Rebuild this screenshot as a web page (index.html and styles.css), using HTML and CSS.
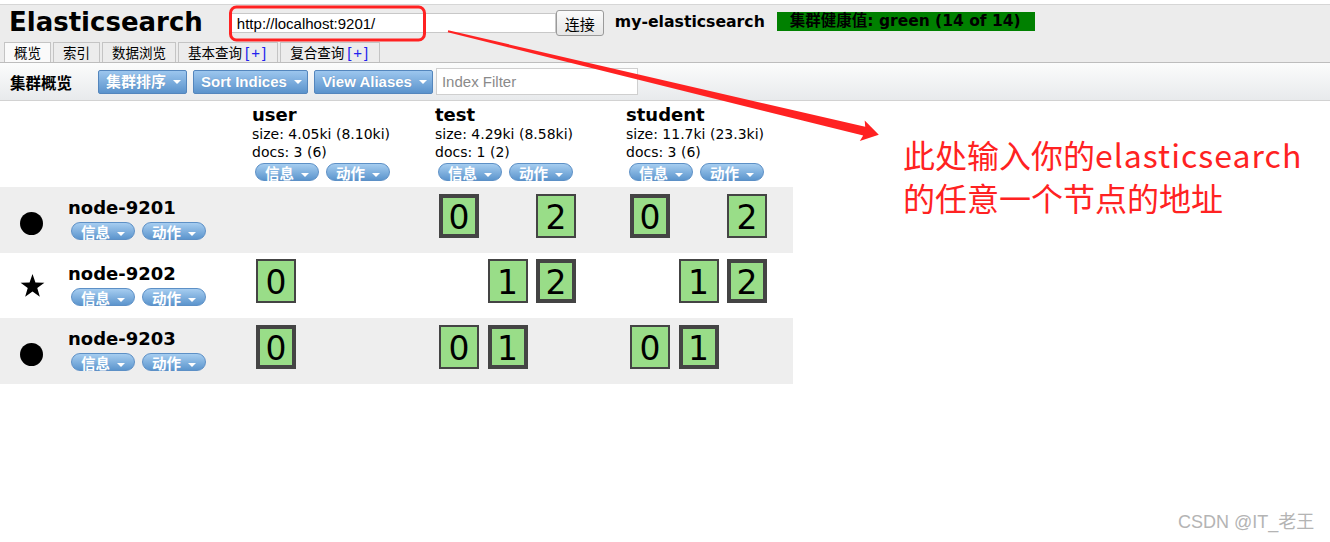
FILE: index.html
```html
<!DOCTYPE html>
<html lang="zh">
<head>
<meta charset="utf-8">
<title>Elasticsearch</title>
<link rel="stylesheet" href="styles.css">
</head>
<body>
<div class="page">
  <header class="header">
    <div class="top">
      <h1 class="title">Elasticsearch</h1>
      <input class="url" type="text" value="http://localhost:9201/">
      <button class="connect">连接</button>
      <span class="cluster">my-elasticsearch</span>
      <span class="health">集群健康值: green (14 of 14)</span>
    </div>
    <nav class="tabs">
      <span class="tab active">概览</span>
      <span class="tab">索引</span>
      <span class="tab">数据浏览</span>
      <span class="tab">基本查询 <b class="plus">[+]</b></span>
      <span class="tab">复合查询 <b class="plus">[+]</b></span>
    </nav>
  </header>

  <div class="toolbar">
    <span class="tb-title">集群概览</span>
    <span class="tbtn first">集群排序<i class="caret"></i></span>
    <span class="tbtn">Sort Indices<i class="caret"></i></span>
    <span class="tbtn">View Aliases<i class="caret"></i></span>
    <input class="filter" type="text" placeholder="Index Filter">
  </div>

  <div class="ov">
    <div class="row hdr">
      <div class="cell"></div>
      <div class="cell ih">
        <div class="iname">user</div>
        <div class="meta">size: 4.05ki (8.10ki)</div>
        <div class="meta">docs: 3 (6)</div>
        <div class="pills"><span class="pill">信息<i class="pcaret"></i></span><span class="pill">动作<i class="pcaret"></i></span></div>
      </div>
      <div class="cell ih">
        <div class="iname">test</div>
        <div class="meta">size: 4.29ki (8.58ki)</div>
        <div class="meta">docs: 1 (2)</div>
        <div class="pills"><span class="pill">信息<i class="pcaret"></i></span><span class="pill">动作<i class="pcaret"></i></span></div>
      </div>
      <div class="cell ih">
        <div class="iname">student</div>
        <div class="meta">size: 11.7ki (23.3ki)</div>
        <div class="meta">docs: 3 (6)</div>
        <div class="pills"><span class="pill">信息<i class="pcaret"></i></span><span class="pill">动作<i class="pcaret"></i></span></div>
      </div>
    </div>

    <div class="row node alt">
      <div class="cell nc">
        <span class="icon"><span class="dot"></span></span>
        <div class="ninfo">
          <div class="nname">node-9201</div>
          <div class="pills"><span class="pill">信息<i class="pcaret"></i></span><span class="pill">动作<i class="pcaret"></i></span></div>
        </div>
      </div>
      <div class="cell sc"><span class="slot"></span><span class="slot"></span><span class="slot"></span></div>
      <div class="cell sc"><span class="shard primary">0</span><span class="slot"></span><span class="shard">2</span></div>
      <div class="cell sc"><span class="shard primary">0</span><span class="slot"></span><span class="shard">2</span></div>
    </div>

    <div class="row node mid">
      <div class="cell nc">
        <span class="icon star-icon"><svg class="star" viewBox="0 0 24 22" width="25" height="23"><polygon points="12,0 14.82,8.12 23.41,8.29 16.57,13.48 19.05,21.71 12,16.8 4.95,21.71 7.43,13.48 0.59,8.29 9.18,8.12" fill="#000"/></svg></span>
        <div class="ninfo">
          <div class="nname">node-9202</div>
          <div class="pills"><span class="pill">信息<i class="pcaret"></i></span><span class="pill">动作<i class="pcaret"></i></span></div>
        </div>
      </div>
      <div class="cell sc"><span class="shard">0</span><span class="slot"></span><span class="slot"></span></div>
      <div class="cell sc"><span class="slot"></span><span class="shard">1</span><span class="shard primary">2</span></div>
      <div class="cell sc"><span class="slot"></span><span class="shard">1</span><span class="shard primary">2</span></div>
    </div>

    <div class="row node alt">
      <div class="cell nc">
        <span class="icon"><span class="dot"></span></span>
        <div class="ninfo">
          <div class="nname">node-9203</div>
          <div class="pills"><span class="pill">信息<i class="pcaret"></i></span><span class="pill">动作<i class="pcaret"></i></span></div>
        </div>
      </div>
      <div class="cell sc"><span class="shard primary">0</span><span class="slot"></span><span class="slot"></span></div>
      <div class="cell sc"><span class="shard">0</span><span class="shard primary">1</span><span class="slot"></span></div>
      <div class="cell sc"><span class="shard">0</span><span class="shard primary">1</span><span class="slot"></span></div>
    </div>
  </div>

  <svg class="annot" width="1330" height="542" viewBox="0 0 1330 542">
    <rect x="230.5" y="7" width="194" height="33" rx="6" ry="6" fill="none" stroke="#ff2222" stroke-width="3"/>
    <polygon points="448.2,30.3 865.2,126.8 864.7,120.5 878.8,134.7 859.8,140.9 863.2,135.6 447.8,32.3" fill="#ff2222"/>
  </svg>
  <div class="note">此处输入你的<span class="latin">elasticsearch</span><br>的任意一个节点的地址</div>
  <div class="watermark">CSDN @IT_老王</div>
</div>
</body>
</html>
```

FILE: styles.css
```css
* { box-sizing: border-box; }
body {
  margin: 0;
  background: #fff;
  font-family: "DejaVu Sans", "Noto Sans CJK SC", sans-serif;
  color: #000;
}
.page {
  position: relative;
  width: 1330px;
  height: 542px;
  overflow: hidden;
  padding-top: 4px;
}

/* header */
.header {
  background: #ececec;
  border-top: 1px solid #d6d6d6;
  border-bottom: 1px solid #bdbdbd;
}
.top {
  display: flex;
  align-items: flex-start;
  height: 37px;
}
.title {
  margin: 2px 0 0 9px;
  font: bold 26px/30px "DejaVu Sans", sans-serif;
}
.url {
  margin: 8px 0 0 27px;
  width: 326px;
  height: 20px;
  border: 1px solid #c8c8c8;
  padding: 0 6px;
  font: 15px "Liberation Sans", Arial, sans-serif;
  color: #000;
  background: #fff;
  outline: none;
}
.connect {
  margin: 5px 0 0 0;
  width: 48px;
  height: 26px;
  border: 1px solid #9a9a9a;
  border-radius: 3px;
  background: linear-gradient(#fbfbfb, #e6e6e6);
  font: 15px/1 "Noto Sans CJK SC", sans-serif;
  color: #000;
  padding: 0;
}
.cluster {
  margin: 7px 0 0 11px;
  font: bold 15.7px/20px "DejaVu Sans", "Noto Sans CJK SC", sans-serif;
}
.health {
  margin: 7px 0 0 12px;
  height: 19px;
  padding: 0 14px 0 13px;
  background: #008000;
  font: bold 15.5px/19px "DejaVu Sans", "Noto Sans CJK SC", sans-serif;
  color: #000;
}
.tabs {
  display: flex;
  gap: 2px;
  padding-left: 4px;
  height: 20px;
}
.tab {
  height: 20px;
  border: 1px solid #c4c4c4;
  border-bottom: none;
  padding: 0 9px;
  font: 13.5px/19px "Noto Sans CJK SC", sans-serif;
  color: #000;
  background: #ececec;
}
.tab.active { background: #fafafa; }
.plus {
  font: normal 15px/19px "Liberation Sans", Arial, sans-serif;
  letter-spacing: 2px;
  color: #2222ee;
}

/* toolbar */
.toolbar {
  display: flex;
  align-items: center;
  height: 38px;
  background: linear-gradient(#fbfcfc, #e8eaec);
  border-bottom: 1px solid #d2d2d2;
}
.tb-title {
  margin-left: 10px;
  font: bold 15.5px/20px "Noto Sans CJK SC", sans-serif;
}
.tbtn {
  display: flex;
  align-items: center;
  gap: 7px;
  height: 24px;
  margin-left: 6px;
  padding: 0 5px 0 7px;
  border: 1px solid #5486bd;
  border-radius: 2px;
  background: linear-gradient(#9cc6ee, #5b93cc);
  color: #fff;
  font: bold 15px/22px "Liberation Sans", "Noto Sans CJK SC", sans-serif;
  text-shadow: 0 0 1px rgba(40, 80, 130, 0.4);
}
.tbtn.first { margin-left: 26px; }
.caret {
  width: 0;
  height: 0;
  border-left: 4px solid transparent;
  border-right: 4px solid transparent;
  border-top: 4px solid #fff;
}
.filter {
  margin-left: 3px;
  width: 202px;
  height: 27px;
  border: 1px solid #cfcfcf;
  padding: 0 5px;
  font: 15px "Liberation Sans", Arial, sans-serif;
  background: #fff;
  outline: none;
}
.filter::placeholder { color: #8a8a8a; }

/* overview */
.ov { width: 793px; }
.row {
  display: grid;
  grid-template-columns: 248px 183px 191px 171px;
}
.hdr { height: 86px; background: #fff; }
.node { height: 66px; }
.node.mid { height: 65px; background: #fff; }
.node.alt { background: #eeeeee; }

.ih { padding: 4px 0 0 4px; }
.iname { font: bold 18px/20px "DejaVu Sans", sans-serif; }
.meta { font: 14px/18px "DejaVu Sans", sans-serif; }
.ih .pills { margin-top: 2px; }

.pills {
  display: flex;
  gap: 7px;
  margin-left: 3px;
}
.pill {
  display: flex;
  align-items: flex-start;
  gap: 7px;
  height: 18px;
  padding: 0 9px;
  border: 1px solid #5d90c6;
  border-radius: 9px;
  background: linear-gradient(#a6cdf0, #5c95cd);
  color: #fff;
  font: bold 14.5px/17px "Noto Sans CJK SC", sans-serif;
}
.pcaret {
  margin-top: 9px;
  width: 0;
  height: 0;
  border-left: 4px solid transparent;
  border-right: 4px solid transparent;
  border-top: 4px solid #fff;
}

.nc { display: flex; align-items: flex-start; }
.icon {
  display: block;
  width: 23px;
  margin: 25px 0 0 20px;
}
.star-icon { margin-top: 21px; margin-left: 20px; width: 25px; }
.star { display: block; }
.dot {
  display: block;
  width: 23px;
  height: 23px;
  border-radius: 50%;
  background: #000;
}
.ninfo { margin-left: 25px; padding-top: 11px; }
.star-icon + .ninfo { margin-left: 23px; }
.nname { font: bold 18px/20px "DejaVu Sans", sans-serif; }
.ninfo .pills { margin-top: 4px; }

.sc {
  display: flex;
  gap: 8.5px;
  padding: 7px 0 0 8px;
}
.node.mid .sc { padding-top: 6px; }
.slot { width: 40px; height: 44px; }
.shard {
  display: flex;
  align-items: center;
  justify-content: center;
  width: 40px;
  height: 44px;
  padding-top: 3px;
  border: 2px solid #444;
  background: #99dd88;
  font: 33px/1 "DejaVu Sans", sans-serif;
  color: #000;
}
.shard.primary { border-width: 4px; }

/* annotations */
.annot {
  position: absolute;
  left: 0;
  top: 0;
  pointer-events: none;
}
.note {
  position: absolute;
  left: 903px;
  top: 133px;
  color: #ff2222;
  font: 32px/43px "Noto Sans CJK SC", sans-serif;
  white-space: nowrap;
}
.note .latin { letter-spacing: 1px; }
.watermark {
  position: absolute;
  left: 1178px;
  top: 512px;
  color: #b4b4b4;
  font: 18px/20px "Liberation Sans", "Noto Sans CJK SC", sans-serif;
}
```
